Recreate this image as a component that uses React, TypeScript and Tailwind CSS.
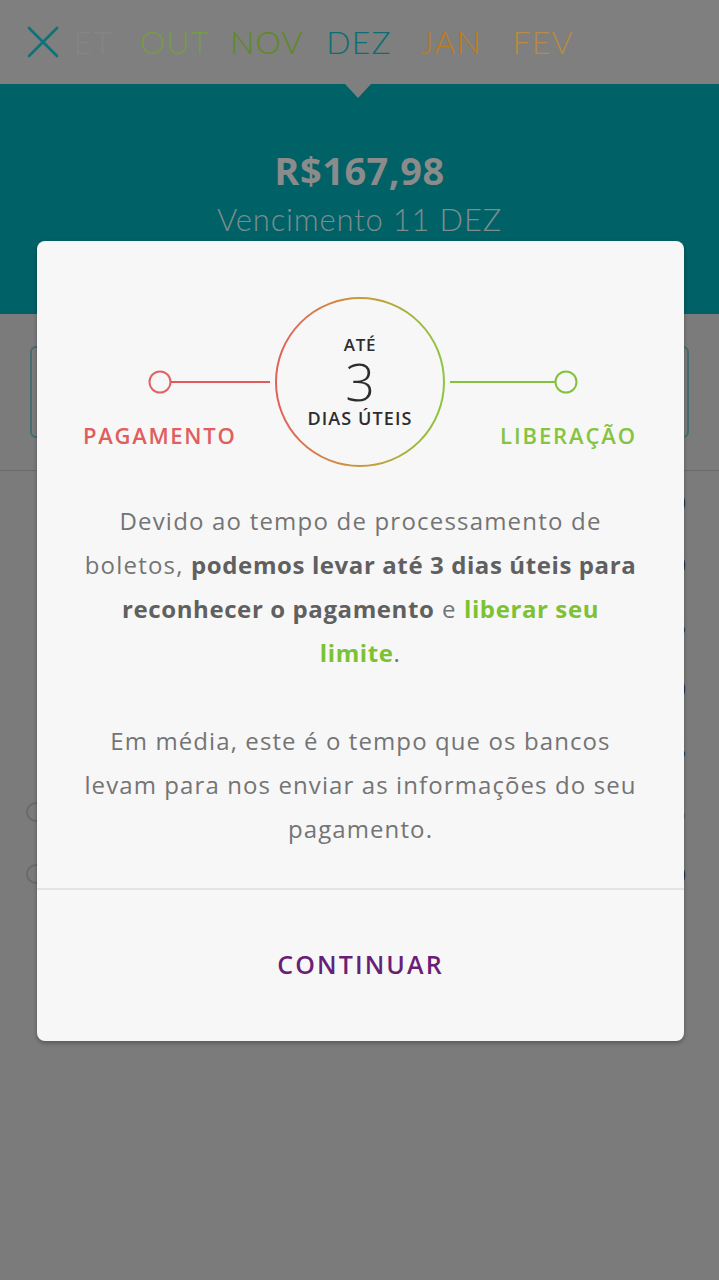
import React from "react";

const months = [
  { label: "OUT", color: "text-[#789a48]" },
  { label: "NOV", color: "text-[#5d8a1c]" },
  { label: "DEZ", color: "text-[#0c6e72]" },
  { label: "JAN", color: "text-[#bd7d1c]" },
  { label: "FEV", color: "text-[#b88a44]" },
];

const rows = [
  { amount: "R$ 120,00", color: "text-[#2a2a2a]", dot: false },
  { amount: "R$ 45,00", color: "text-[#2a2a2a]", dot: false },
  { amount: "R$ 12,35", color: "text-[#2a2a2a]", dot: false },
  { amount: "R$ 80,00", color: "text-[#2a2a2a]", dot: false },
  { amount: "R$ 19,45", color: "text-[#2a2a2a]", dot: false },
  { amount: "R$ 8,15", color: "text-[#4f6b2a]", dot: true },
  { amount: "R$ 30,00", color: "text-[#2a2a2a]", dot: true },
];

function CloseIcon() {
  return (
    <svg width="32" height="32" viewBox="0 0 32 32" fill="none">
      <path d="M2 2 L30 30 M30 2 L2 30" stroke="#0c7378" strokeWidth="2.6" strokeLinecap="round" />
    </svg>
  );
}

function Diagram() {
  return (
    <div className="relative mt-[56px] h-[170px] w-full">
      <svg className="absolute inset-0" width="647" height="170" viewBox="0 0 647 170" fill="none">
        <defs>
          <linearGradient id="ring" x1="238" y1="0" x2="408" y2="0" gradientUnits="userSpaceOnUse">
            <stop offset="0" stopColor="#e2605c" />
            <stop offset="0.5" stopColor="#c99a3a" />
            <stop offset="1" stopColor="#8cc63f" />
          </linearGradient>
        </defs>
        <circle cx="323" cy="85" r="84" stroke="url(#ring)" strokeWidth="2" />
        <circle cx="123" cy="85" r="10.5" stroke="#e06464" strokeWidth="2" />
        <line x1="134" y1="85" x2="233" y2="85" stroke="#e05a5a" strokeWidth="2.2" />
        <line x1="413" y1="85" x2="518" y2="85" stroke="#84c23c" strokeWidth="2.2" />
        <circle cx="529" cy="85" r="10.5" stroke="#84c23c" strokeWidth="2" />
      </svg>
      <div className="absolute left-[238px] top-0 flex h-[170px] w-[170px] flex-col items-center justify-center text-[#2d2d2d]">
        <span className="text-[17px] font-semibold leading-[22px] tracking-[0.8px]">ATÉ</span>
        <span className="-my-[4px] text-[52px] font-light leading-[58px]">3</span>
        <span className="text-[18px] font-semibold leading-[24px] tracking-[1.1px]">DIAS ÚTEIS</span>
      </div>
      <span className="absolute left-[46px] top-[125px] text-[22px] font-semibold leading-[26px] tracking-[1.7px] text-[#e05e5e]">
        PAGAMENTO
      </span>
      <span className="absolute right-[47px] top-[125px] text-[22px] font-semibold leading-[26px] tracking-[1.9px] text-[#85c440]">
        LIBERAÇÃO
      </span>
    </div>
  );
}

export default function App() {
  return (
    <div className="relative h-[1280px] w-[719px] overflow-hidden bg-[#7b7b7b] font-['Open_Sans',sans-serif]">
      {/* dimmed app underneath */}
      <div className="flex h-[84px] items-center bg-[#7f7f7f] pl-[27px]">
        <CloseIcon />
        <div className="-ml-[22px] flex font-['Lato',sans-serif] text-[32px] font-light leading-none tracking-[1.2px]">
          <span className="w-[92px] shrink-0 pr-[16px] text-right text-[#858585]">ET</span>
          {months.map((m) => (
            <span key={m.label} className={`w-[92px] shrink-0 text-center ${m.color}`}>
              {m.label}
            </span>
          ))}
        </div>
      </div>
      <div className="relative flex h-[230px] flex-col items-center bg-[#006166] pt-[64px]">
        <div className="absolute left-[345px] top-0 h-0 w-0 border-x-[13px] border-t-[14px] border-x-transparent border-t-[#7f7f7f]" />
        <div className="text-[38px] font-bold leading-[44px] tracking-[0.5px] text-[#8b8b8b]">R$167,98</div>
        <div className="mt-[9px] font-['Lato',sans-serif] text-[31px] font-light leading-[36px] tracking-[0.8px] text-[#7d8d8d]">
          Vencimento 11 DEZ
        </div>
      </div>
      <div className="h-[156px] px-[30px] pt-[32px]">
        <div className="h-[92px] rounded-[6px] border-2 border-[#3f6f72]" />
      </div>
      <div className="border-t border-[#6a6a6a]">
        {rows.map((r, i) => (
          <div key={i} className="flex h-[62px] items-center justify-between pl-[26px] pr-[33px]">
            <div className={`h-[20px] w-[20px] rounded-full border-2 ${r.dot ? "border-[#6a6a6a]" : "border-transparent"}`} />
            <span className={`text-[22px] ${r.color}`}>{r.amount}</span>
          </div>
        ))}
      </div>

      {/* modal */}
      <div className="absolute left-[37px] top-[241px] flex h-[800px] w-[647px] flex-col rounded-[8px] bg-[#f7f7f7] shadow-[0_2px_4px_rgba(0,0,0,0.3)]">
        <Diagram />
        <p className="mt-[32px] text-center text-[24px] leading-[44px] tracking-[1.2px] text-[#747474]">
          Devido ao tempo de processamento de
          <br />
          boletos, <b className="font-bold tracking-[0.6px] text-[#606060]">podemos levar até 3 dias úteis para</b>
          <br />
          <b className="font-bold tracking-[0.6px] text-[#606060]">reconhecer o pagamento</b> e{" "}
          <b className="font-bold tracking-[0.6px] text-[#7cc232]">liberar seu</b>
          <br />
          <b className="font-bold tracking-[0.6px] text-[#7cc232]">limite</b>.
        </p>
        <p className="mt-[44px] text-center text-[24px] leading-[44px] tracking-[1.1px] text-[#747474]">
          Em média, este é o tempo que os bancos
          <br />
          levam para nos enviar as informações do seu
          <br />
          pagamento.
        </p>
        <div className="mt-[37px] border-t-2 border-[#e4e4e4]" />
        <div className="flex flex-1 items-center justify-center pb-[2px]">
          <span className="text-[25px] font-semibold tracking-[2.1px] text-[#6a1f76]">CONTINUAR</span>
        </div>
      </div>
    </div>
  );
}
